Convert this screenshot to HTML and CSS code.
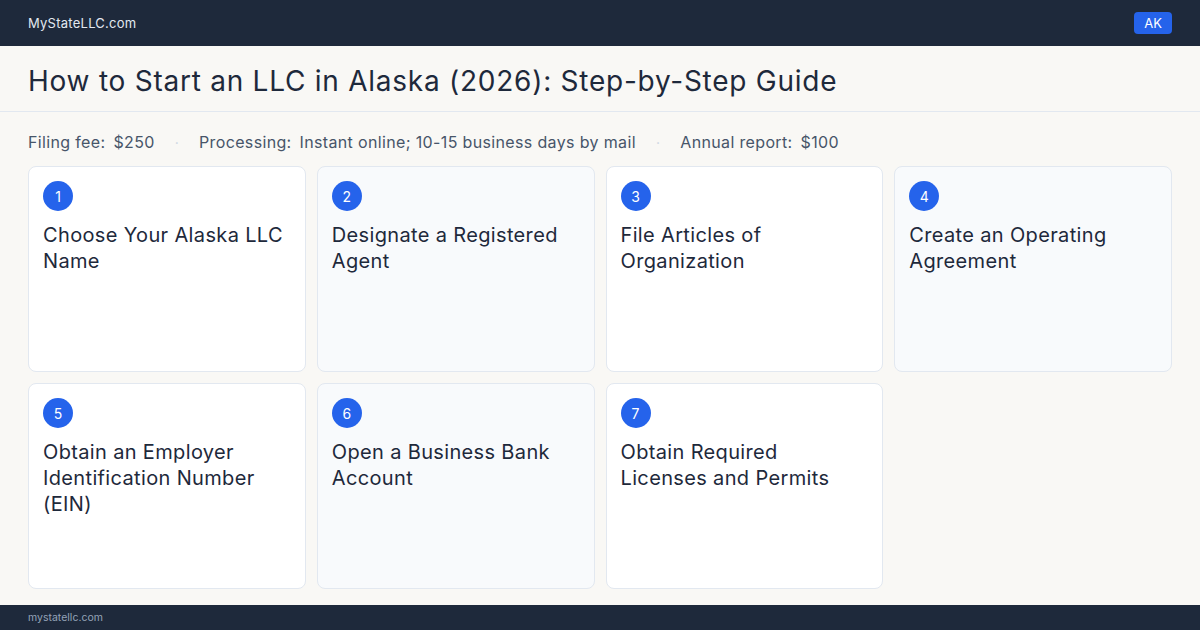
FILE: index.html
```html
<!DOCTYPE html>
<html lang="en">
<head>
<meta charset="utf-8">
<title>How to Start an LLC in Alaska (2026)</title>
<link rel="stylesheet" href="styles.css">
</head>
<body>
<div class="page">
  <header class="topbar">
    <span class="brand">MyStateLLC.com</span>
    <span class="state-badge">AK</span>
  </header>

  <section class="hero">
    <h1 class="hero-title">How to Start an LLC in Alaska (2026): Step-by-Step Guide</h1>
  </section>

  <main class="content">
    <div class="facts">
      <span class="fact"><span class="fact-label">Filing fee:</span><span class="fact-value">$250</span></span>
      <span class="fact-sep">·</span>
      <span class="fact"><span class="fact-label">Processing:</span><span class="fact-value">Instant online; 10-15 business days by mail</span></span>
      <span class="fact-sep">·</span>
      <span class="fact"><span class="fact-label">Annual report:</span><span class="fact-value">$100</span></span>
    </div>

    <ol class="steps">
      <li class="step"><span class="step-num">1</span><h2 class="step-title">Choose Your Alaska LLC Name</h2></li>
      <li class="step step-alt"><span class="step-num">2</span><h2 class="step-title">Designate a Registered Agent</h2></li>
      <li class="step"><span class="step-num">3</span><h2 class="step-title">File Articles of Organization</h2></li>
      <li class="step step-alt"><span class="step-num">4</span><h2 class="step-title">Create an Operating Agreement</h2></li>
      <li class="step"><span class="step-num">5</span><h2 class="step-title">Obtain an Employer Identification Number (EIN)</h2></li>
      <li class="step step-alt"><span class="step-num">6</span><h2 class="step-title">Open a Business Bank Account</h2></li>
      <li class="step"><span class="step-num">7</span><h2 class="step-title">Obtain Required Licenses and Permits</h2></li>
    </ol>
  </main>

  <footer class="footer">mystatellc.com</footer>
</div>
</body>
</html>
```

FILE: styles.css
```css
* {
  box-sizing: border-box;
}

html, body {
  margin: 0;
  padding: 0;
}

body {
  width: 1200px;
  height: 630px;
  overflow: hidden;
  background: #f9f8f5;
  color: #1e293b;
  font-family: Inter, "Noto Sans", "Liberation Sans", sans-serif;
}

.page {
  display: flex;
  flex-direction: column;
  height: 630px;
}

/* top navigation bar */
.topbar {
  height: 46px;
  flex: none;
  background: #1e293b;
  display: flex;
  align-items: center;
  justify-content: space-between;
  padding: 0 28px;
}

.brand {
  color: #e2e8f0;
  font-size: 13px;
  letter-spacing: 0.25px;
}

.state-badge {
  background: #2563eb;
  color: #ffffff;
  font-size: 13px;
  line-height: 22px;
  height: 22px;
  padding: 0 10px;
  border-radius: 4px;
}

/* page heading */
.hero {
  flex: none;
  height: 66px;
  border-bottom: 1px solid #e2e8f0;
  display: flex;
  align-items: center;
  padding: 4px 28px 0;
}

.hero-title {
  margin: 0;
  font-size: 28px;
  font-weight: 400;
  color: #1e293b;
  letter-spacing: 0.75px;
}

.content {
  flex: 1;
  padding: 18px 28px 0;
}

/* key facts line */
.facts {
  display: flex;
  align-items: center;
  gap: 20px;
  height: 24px;
  font-size: 16px;
  color: #475569;
  letter-spacing: 0.35px;
}

.fact-label {
  margin-right: 8px;
}

.fact-sep {
  color: #cbd5e1;
  font-size: 14px;
}

/* step cards */
.steps {
  list-style: none;
  margin: 0;
  padding: 0;
  margin-top: 12px;
  display: grid;
  grid-template-columns: repeat(4, 1fr);
  grid-template-rows: 206px 206px;
  gap: 11px;
}

.step {
  background: #ffffff;
  border: 1px solid #e2e8f0;
  border-radius: 8px;
  padding: 14px 14px;
}

.step-alt {
  background: #f8fafc;
}

.step-num {
  display: flex;
  align-items: center;
  justify-content: center;
  width: 30px;
  height: 30px;
  border-radius: 50%;
  background: #2563eb;
  color: #ffffff;
  font-size: 14px;
}

.step-title {
  margin: 11px 0 0;
  font-size: 20px;
  font-weight: 400;
  line-height: 26px;
  color: #1e293b;
  letter-spacing: 0.35px;
}

/* bottom strip */
.footer {
  flex: none;
  height: 25px;
  background: #1e293b;
  color: #94a3b8;
  font-size: 10.5px;
  line-height: 25px;
  padding: 0 28px;
}
```
